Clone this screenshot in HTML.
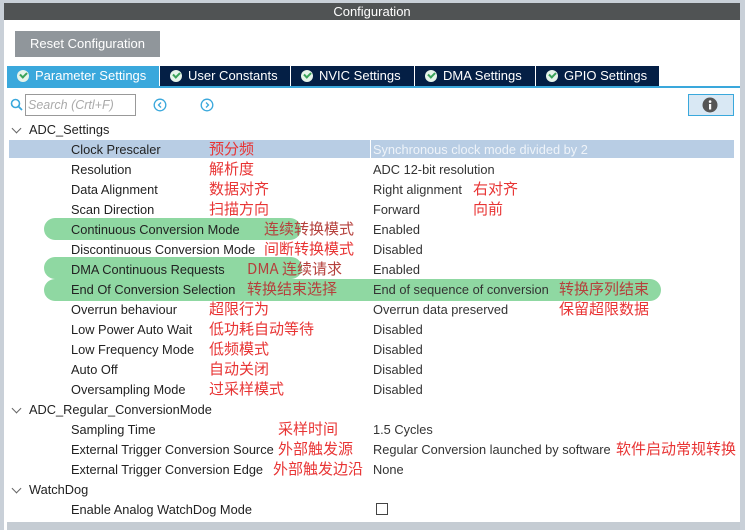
<!DOCTYPE html>
<html><head><meta charset="utf-8"><style>
*{margin:0;padding:0;box-sizing:border-box}
body{width:745px;height:530px;overflow:hidden;background:#c9d0d8;font-family:"Liberation Sans","Noto Sans CJK SC",sans-serif;position:relative}
.win{position:absolute;left:4px;top:3px;width:736px;height:527px;background:#fff}
.title{position:absolute;left:4px;top:3px;width:736px;height:17px;background:#505354;color:#fff;font-size:13px;text-align:center;line-height:17px}
.abs{position:absolute;white-space:nowrap}
.btn{left:15px;top:31px;width:145px;height:26px;background:#90969b;color:#fff;font-size:13px;text-align:center;line-height:26px}
.tab{top:66px;height:20px;background:#041f45;color:#fff;font-size:13px;line-height:20px;padding-left:28px}
.tab.on{background:#3aa8dc}
.chk{position:absolute;left:10px;top:4px;width:12px;height:12px;border-radius:50%;background:#e6f4ea}
.chk:after{content:"";position:absolute;left:3px;top:2px;width:5px;height:3px;border-left:2px solid #3aa35a;border-bottom:2px solid #3aa35a;transform:rotate(-45deg)}
.lbl{font-size:12.8px;color:#222;left:71px}
.val{font-size:12.8px;color:#333;left:373px}
.cn{font-size:15px;color:#e83434;font-family:"Noto Sans CJK SC",sans-serif}
.cn.d{color:#b5403c}
.grp{font-size:12.8px;color:#222;left:29px}
.arr{left:13px;width:7px;height:7px;border-right:1px solid #666;border-bottom:1px solid #666;transform:rotate(45deg)}
.pill{background:#8fd8a2;border-radius:11px}
</style></head><body>
<div class="win"></div>
<div class="title">Configuration</div>
<div class="abs btn">Reset Configuration</div>
<div class="abs tab on" style="left:7px;width:152px"><span class="chk"></span>Parameter Settings</div>
<div class="abs tab" style="left:160px;width:130px"><span class="chk"></span>User Constants</div>
<div class="abs tab" style="left:291px;width:123px"><span class="chk"></span>NVIC Settings</div>
<div class="abs tab" style="left:415px;width:120px"><span class="chk"></span>DMA Settings</div>
<div class="abs tab" style="left:536px;width:123px"><span class="chk"></span>GPIO Settings</div>
<div class="abs" style="left:7px;top:86px;width:733px;height:2px;background:#3aa8dc"></div>
<svg class="abs" style="left:10px;top:98px" width="14" height="14"><circle cx="5.5" cy="5.5" r="4" fill="none" stroke="#3aa8dc" stroke-width="1.6"/><line x1="8.5" y1="8.5" x2="12" y2="12" stroke="#3aa8dc" stroke-width="1.8"/></svg>
<div class="abs" style="left:25px;top:94px;width:111px;height:22px;border:1px solid #999;font-size:12.5px;font-style:italic;color:#aaa;line-height:20px;padding-left:2px">Search (Crtl+F)</div>
<svg class="abs" style="left:153px;top:98px" width="14" height="14"><circle cx="7" cy="7" r="5.8" fill="none" stroke="#3aa8dc" stroke-width="1.3"/><path d="M8 4.5L5.5 7L8 9.5" fill="none" stroke="#3aa8dc" stroke-width="1.3"/></svg>
<svg class="abs" style="left:200px;top:98px" width="14" height="14"><circle cx="7" cy="7" r="5.8" fill="none" stroke="#3aa8dc" stroke-width="1.3"/><path d="M6 4.5L8.5 7L6 9.5" fill="none" stroke="#3aa8dc" stroke-width="1.3"/></svg>
<div class="abs" style="left:688px;top:94px;width:46px;height:22px;background:#d9e8f4;border:1px solid #3aa8dc"></div>
<svg class="abs" style="left:702px;top:97px" width="16" height="16"><circle cx="8" cy="8" r="7.5" fill="#555"/><rect x="7" y="7" width="2.2" height="5.5" fill="#fff"/><circle cx="8.1" cy="4.6" r="1.3" fill="#fff"/></svg>

<div class="abs arr" style="top:125px"></div><div class="abs grp" style="top:122px">ADC_Settings</div>
<div class="abs" style="left:9px;top:140px;width:725px;height:18px;background:#b8cde4"></div>
<div class="abs" style="left:370px;top:140px;width:1px;height:18px;background:#fff"></div>

<div class="abs pill" style="left:44px;top:218px;width:257px;height:22px"></div>
<div class="abs pill" style="left:44px;top:257px;width:258px;height:22px"></div>
<div class="abs pill" style="left:44px;top:279px;width:617px;height:22px"></div>

<div class="abs lbl" style="top:142px">Clock Prescaler</div><div class="abs val" style="top:142px;color:#eef3f9">Synchronous clock mode divided by 2</div><div class="abs cn" style="left:209px;top:138px">预分频</div>
<div class="abs lbl" style="top:162px">Resolution</div><div class="abs val" style="top:162px">ADC 12-bit resolution</div><div class="abs cn" style="left:209px;top:158px">解析度</div>
<div class="abs lbl" style="top:182px">Data Alignment</div><div class="abs val" style="top:182px">Right alignment</div><div class="abs cn" style="left:209px;top:178px">数据对齐</div><div class="abs cn" style="left:473px;top:178px">右对齐</div>
<div class="abs lbl" style="top:202px">Scan Direction</div><div class="abs val" style="top:202px">Forward</div><div class="abs cn" style="left:209px;top:198px">扫描方向</div><div class="abs cn" style="left:473px;top:198px">向前</div>
<div class="abs lbl" style="top:222px">Continuous Conversion Mode</div><div class="abs val" style="top:222px">Enabled</div><div class="abs cn d" style="left:264px;top:218px">连续转换模式</div>
<div class="abs lbl" style="top:242px">Discontinuous Conversion Mode</div><div class="abs val" style="top:242px">Disabled</div><div class="abs cn" style="left:264px;top:238px">间断转换模式</div>
<div class="abs lbl" style="top:262px">DMA Continuous Requests</div><div class="abs val" style="top:262px">Enabled</div><div class="abs cn d" style="left:247px;top:258px">DMA 连续请求</div>
<div class="abs lbl" style="top:282px">End Of Conversion Selection</div><div class="abs val" style="top:282px">End of sequence of conversion</div><div class="abs cn d" style="left:247px;top:278px">转换结束选择</div><div class="abs cn d" style="left:559px;top:278px">转换序列结束</div>
<div class="abs lbl" style="top:302px">Overrun behaviour</div><div class="abs val" style="top:302px">Overrun data preserved</div><div class="abs cn" style="left:209px;top:298px">超限行为</div><div class="abs cn" style="left:559px;top:298px">保留超限数据</div>
<div class="abs lbl" style="top:322px">Low Power Auto Wait</div><div class="abs val" style="top:322px">Disabled</div><div class="abs cn" style="left:209px;top:318px">低功耗自动等待</div>
<div class="abs lbl" style="top:342px">Low Frequency Mode</div><div class="abs val" style="top:342px">Disabled</div><div class="abs cn" style="left:209px;top:338px">低频模式</div>
<div class="abs lbl" style="top:362px">Auto Off</div><div class="abs val" style="top:362px">Disabled</div><div class="abs cn" style="left:209px;top:358px">自动关闭</div>
<div class="abs lbl" style="top:382px">Oversampling Mode</div><div class="abs val" style="top:382px">Disabled</div><div class="abs cn" style="left:209px;top:378px">过采样模式</div>

<div class="abs arr" style="top:405px"></div><div class="abs grp" style="top:402px">ADC_Regular_ConversionMode</div>
<div class="abs lbl" style="top:422px">Sampling Time</div><div class="abs val" style="top:422px">1.5 Cycles</div><div class="abs cn" style="left:278px;top:418px">采样时间</div>
<div class="abs lbl" style="top:442px">External Trigger Conversion Source</div><div class="abs val" style="top:442px">Regular Conversion launched by software</div><div class="abs cn" style="left:278px;top:438px">外部触发源</div><div class="abs cn" style="left:616px;top:438px">软件启动常规转换</div>
<div class="abs lbl" style="top:462px">External Trigger Conversion Edge</div><div class="abs val" style="top:462px">None</div><div class="abs cn" style="left:273px;top:458px">外部触发边沿</div>
<div class="abs arr" style="top:485px"></div><div class="abs grp" style="top:482px">WatchDog</div>
<div class="abs lbl" style="top:502px">Enable Analog WatchDog Mode</div>
<div class="abs" style="left:376px;top:503px;width:12px;height:12px;border:1px solid #444"></div>
<div class="abs" style="left:7px;top:522px;width:733px;height:8px;background:#c5ccd3"></div>
</body></html>
